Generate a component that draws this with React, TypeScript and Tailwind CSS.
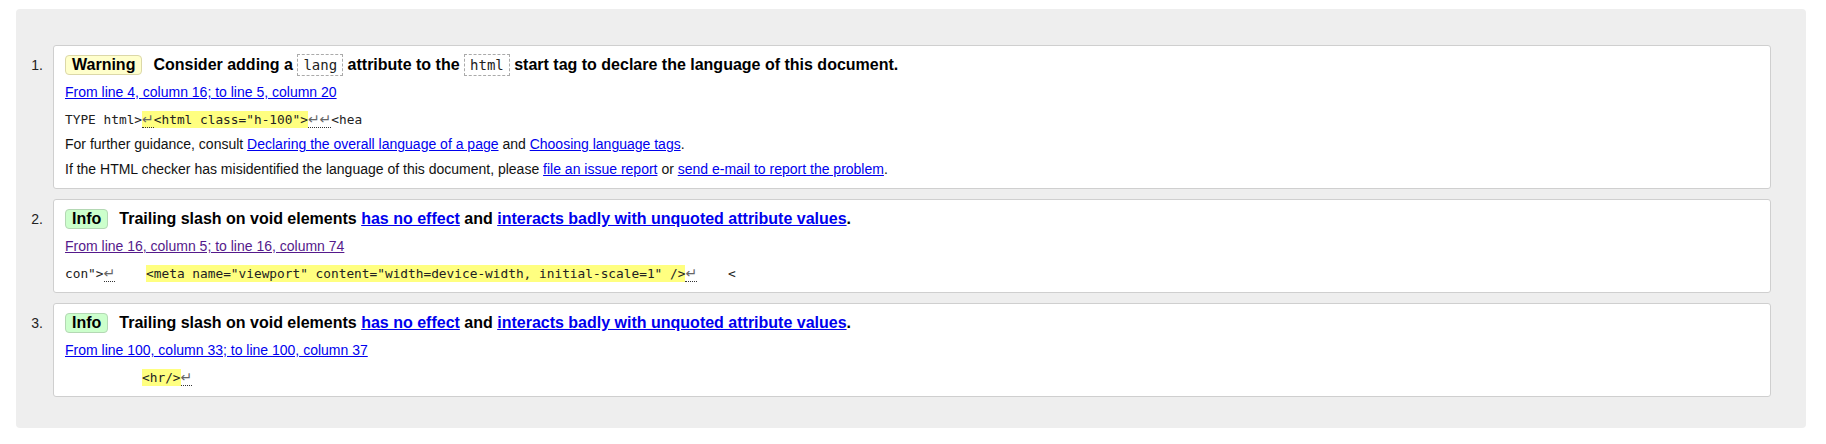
import type { ReactNode } from "react";

const mono = "font-['DejaVu_Sans_Mono',monospace] text-[12.8px]";

// line-break marker shown in the source extract
function Nl({ n = 1 }: { n?: number }) {
  return (
    <span className="border-b border-dotted border-[#333] font-['DejaVu_Sans',sans-serif] text-[14px] text-[#666]">
      {"↵".repeat(n)}
    </span>
  );
}

function Hl({ children }: { children: ReactNode }) {
  return <span className="bg-[#ffff80] py-px">{children}</span>;
}

function Tag({ children }: { children: ReactNode }) {
  return (
    <span className="inline-block h-[22px] border border-dashed border-[#aaa] px-[5px] font-['DejaVu_Sans_Mono',monospace] text-[14px] font-normal leading-[20px] text-[#222]">
      {children}
    </span>
  );
}

function A({ children, visited = false, bold = false }: { children: ReactNode; visited?: boolean; bold?: boolean }) {
  return (
    <a
      href="#"
      className={`underline ${visited ? "text-[#551a8b]" : "text-[#0000ee]"} ${bold ? "font-bold" : ""}`}
    >
      {children}
    </a>
  );
}

function Badge({ kind }: { kind: "warning" | "info" }) {
  const warn = kind === "warning";
  return (
    <span
      className={`inline-block h-5 shrink-0 rounded-[4px] border px-[6px] text-[16px] font-bold leading-[18px] text-black ${
        warn ? "border-[#dcd8a8] bg-[#ffffcc]" : "border-[#b4d8b4] bg-[#ccffcc]"
      }`}
    >
      {warn ? "Warning" : "Info"}
    </span>
  );
}

function Item({
  n,
  kind,
  title,
  children,
}: {
  n: number;
  kind: "warning" | "info";
  title: ReactNode;
  children: ReactNode;
}) {
  return (
    <li className="flex">
      <div className="w-[37px] shrink-0 pr-[10px] pt-[10px] text-right text-[14px] leading-5 text-[#222]">{n}.</div>
      <div className="flex-1 rounded-[3px] border border-[#cfcfcf] bg-white px-[11px] pb-[9px] pt-[9px]">
        <div className="flex h-5 items-center">
          <Badge kind={kind} />
          <span className="ml-[11px] whitespace-nowrap text-[16px] font-bold leading-5 text-black">{title}</span>
        </div>
        {children}
      </div>
    </li>
  );
}

function Loc({ children, visited = false }: { children: ReactNode; visited?: boolean }) {
  return (
    <div className="mt-[7px] h-5 text-[14px] leading-5">
      <A visited={visited}>{children}</A>
    </div>
  );
}

function Extract({ children }: { children: ReactNode }) {
  return <div className={`mt-[7px] h-5 whitespace-pre leading-5 text-[#222] ${mono}`}>{children}</div>;
}

function Para({ children }: { children: ReactNode }) {
  return <p className="mt-[5px] h-5 text-[14px] leading-5 text-[#111]">{children}</p>;
}

export default function App() {
  const slashTitle = (
    <>
      Trailing slash on void elements <A bold>has no effect</A> and{" "}
      <A bold>interacts badly with unquoted attribute values</A>.
    </>
  );

  return (
    <div className="min-h-[444px] bg-white pl-[16px] pr-[20px] pt-[9px] font-['Liberation_Sans',Arial,sans-serif]">
      <div className="rounded-[4px] bg-[#eeeeee] pb-[31px] pr-[35px] pt-[36px]">
        <ol className="flex flex-col gap-[10px]">
          <Item
            n={1}
            kind="warning"
            title={
              <>
                Consider adding a <Tag>lang</Tag> attribute to the <Tag>html</Tag> start tag to declare the language
                of this document.
              </>
            }
          >
            <Loc>From line 4, column 16; to line 5, column 20</Loc>
            <Extract>
              TYPE html&gt;
              <Hl>
                <Nl />
                {'<html class="h-100">'}
              </Hl>
              <Nl n={2} />
              {"<hea"}
            </Extract>
            <Para>
              For further guidance, consult <A>Declaring the overall language of a page</A> and{" "}
              <A>Choosing language tags</A>.
            </Para>
            <Para>
              If the HTML checker has misidentified the language of this document, please <A>file an issue report</A>{" "}
              or <A>send e-mail to report the problem</A>.
            </Para>
          </Item>

          <Item n={2} kind="info" title={slashTitle}>
            <Loc visited>From line 16, column 5; to line 16, column 74</Loc>
            <Extract>
              {'con">'}
              <Nl />
              {"    "}
              <Hl>{'<meta name="viewport" content="width=device-width, initial-scale=1" />'}</Hl>
              <Nl />
              {"    <"}
            </Extract>
          </Item>

          <Item n={3} kind="info" title={slashTitle}>
            <Loc>From line 100, column 33; to line 100, column 37</Loc>
            <Extract>
              {"          "}
              <Hl>{"<hr/>"}</Hl>
              <Nl />
            </Extract>
          </Item>
        </ol>
      </div>
    </div>
  );
}
